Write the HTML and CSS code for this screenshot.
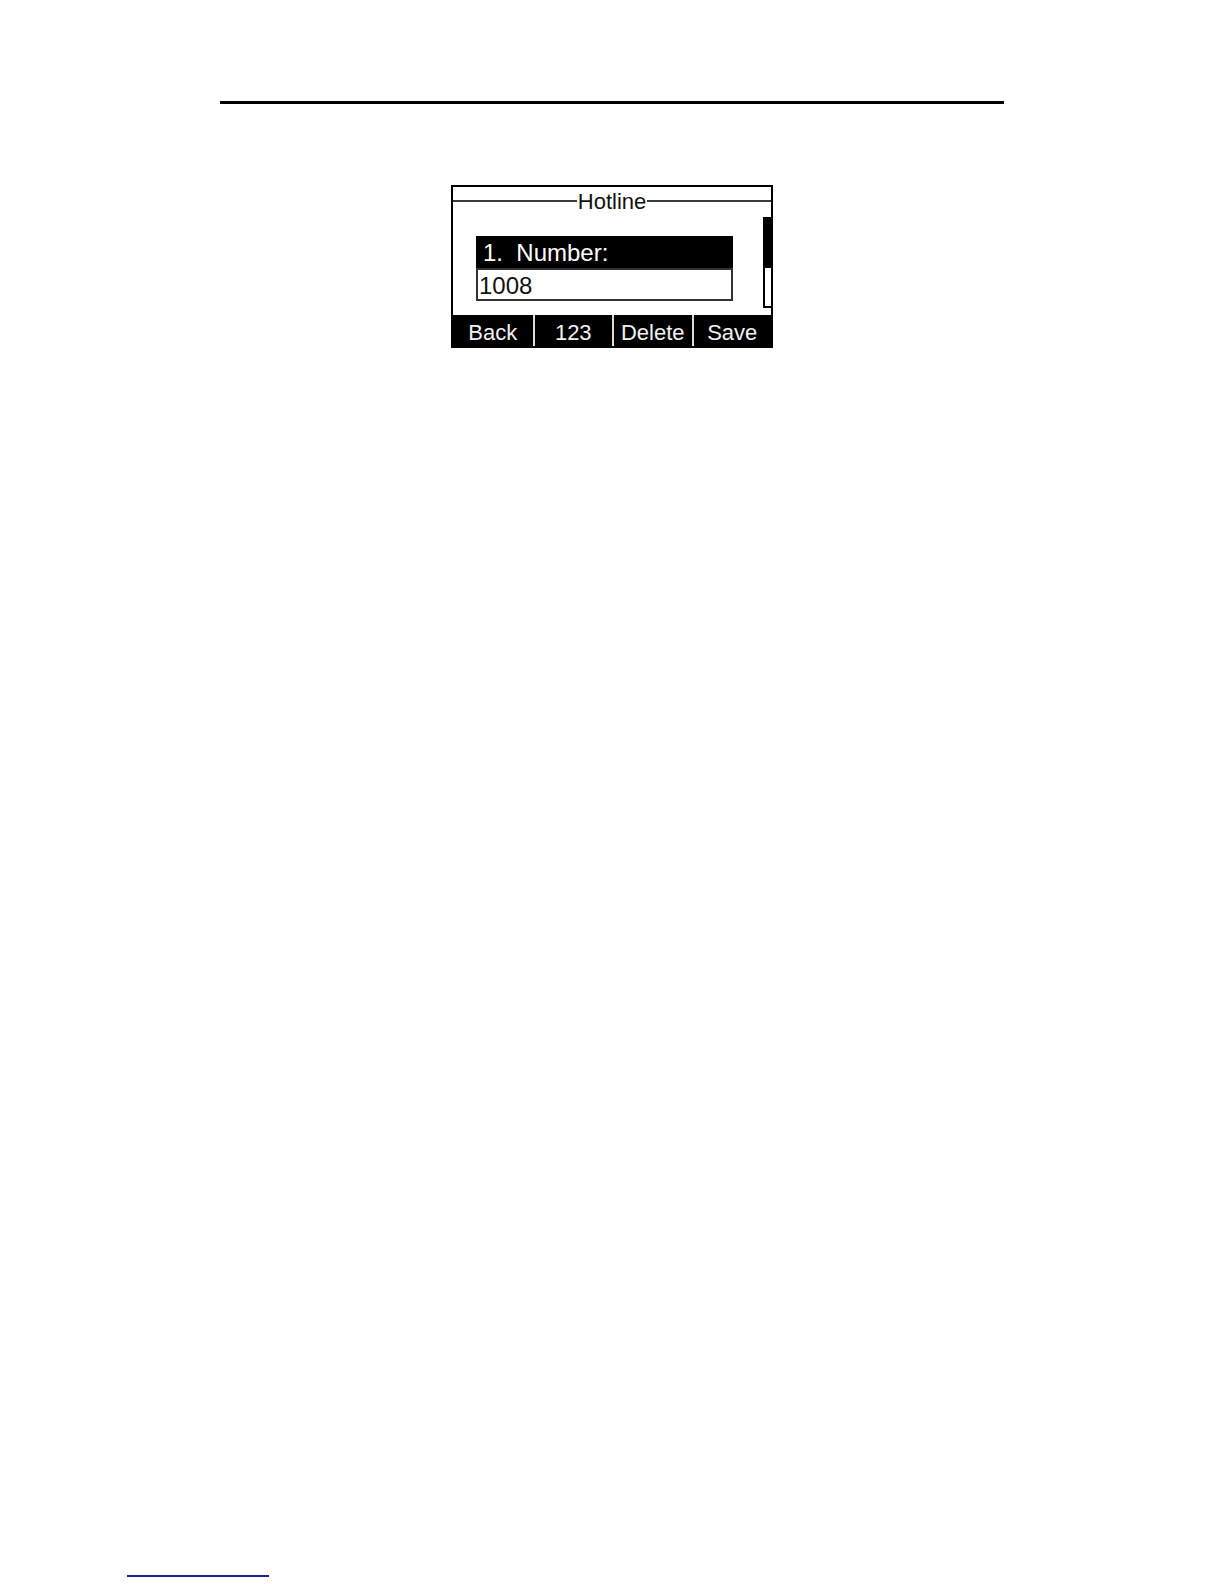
FILE: index.html
```html
<!DOCTYPE html>
<html lang="en">
<head>
<meta charset="utf-8">
<title>Hotline</title>
<link rel="stylesheet" href="styles.css">
</head>
<body>
<div class="page">
  <div class="rule"></div>
  <div class="screen">
    <div class="title-row">
      <span class="title-line"></span>
      <span class="title">Hotline</span>
      <span class="title-line"></span>
    </div>
    <div class="screen-body">
      <div class="field">
        <div class="field-label">1.&nbsp;&nbsp;Number:</div>
        <div class="field-input">1008</div>
      </div>
      <div class="scrollbar">
        <div class="scroll-thumb"></div>
        <div class="scroll-track"></div>
      </div>
    </div>
    <div class="softkeys">
      <div class="softkey">Back</div>
      <div class="softkey">123</div>
      <div class="softkey">Delete</div>
      <div class="softkey">Save</div>
    </div>
  </div>
  <div class="footnote-rule"></div>
</div>
</body>
</html>
```

FILE: styles.css
```css
html, body {
  margin: 0;
  padding: 0;
  background: #ffffff;
}

.page {
  padding-top: 101px;
  font-family: "Liberation Sans", Arial, sans-serif;
  color: #000;
}

.rule {
  margin-left: 220px;
  width: 784px;
  height: 0;
  border-top: 3px solid #000;
}

.screen {
  box-sizing: border-box;
  width: 322px;
  margin: 81px auto 0;
  border: 2px solid #000;
  background: #fff;
  display: flex;
  flex-direction: column;
}

.title-row {
  height: 28px;
  display: flex;
  align-items: center;
  gap: 1px;
}

.title-line {
  flex: 1;
  height: 2px;
  background: #3a3a3a;
}

.title {
  font-size: 22px;
  line-height: 26px;
  padding-top: 1px;
  color: #111;
}

.screen-body {
  height: 100px;
  display: flex;
  align-items: flex-start;
}

.field {
  width: 257px;
  margin-left: 23px;
  margin-top: 21px;
}

.field-label {
  height: 32px;
  box-sizing: border-box;
  padding: 2px 0 0 7px;
  background: #000;
  color: #fff;
  font-size: 24px;
  line-height: 30px;
  white-space: nowrap;
}

.field-input {
  box-sizing: border-box;
  height: 33px;
  border: 2px solid #333;
  padding: 3px 0 0 1px;
  font-size: 24px;
  line-height: 26px;
  color: #111;
}

.scrollbar {
  width: 8px;
  margin-left: auto;
  margin-top: 2px;
  height: 91px;
  display: flex;
  flex-direction: column;
}

.scroll-thumb {
  height: 51px;
  background: #000;
}

.scroll-track {
  flex: 1;
  border-left: 2px solid #000;
  border-bottom: 2px solid #000;
  background: #fff;
}

.softkeys {
  height: 31px;
  background: #000;
  display: grid;
  grid-template-columns: repeat(4, 1fr);
}

.softkey {
  box-sizing: border-box;
  padding-top: 4px;
  font-size: 22px;
  line-height: 27px;
  color: #f2f2f2;
  text-align: center;
  white-space: nowrap;
}

.softkey + .softkey {
  border-left: 2px solid #dcdcdc;
}

.footnote-rule {
  margin-top: 1227px;
  margin-left: 127px;
  width: 142px;
  height: 0;
  border-top: 2px solid #1f1f8f;
}
```
